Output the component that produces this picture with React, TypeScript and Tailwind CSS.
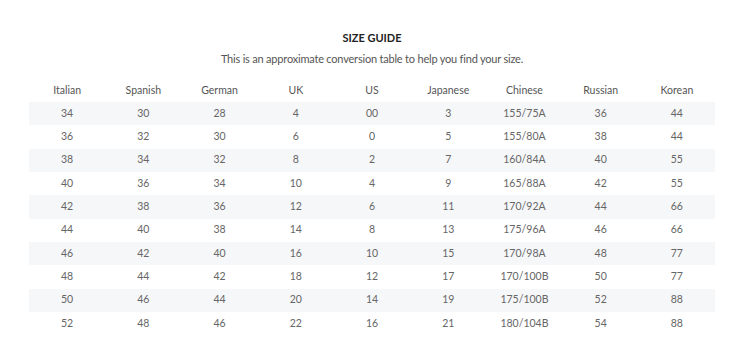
const headers = ["Italian", "Spanish", "German", "UK", "US", "Japanese", "Chinese", "Russian", "Korean"];

const rows = [
  ["34", "30", "28", "4", "00", "3", "155/75A", "36", "44"],
  ["36", "32", "30", "6", "0", "5", "155/80A", "38", "44"],
  ["38", "34", "32", "8", "2", "7", "160/84A", "40", "55"],
  ["40", "36", "34", "10", "4", "9", "165/88A", "42", "55"],
  ["42", "38", "36", "12", "6", "11", "170/92A", "44", "66"],
  ["44", "40", "38", "14", "8", "13", "175/96A", "46", "66"],
  ["46", "42", "40", "16", "10", "15", "170/98A", "48", "77"],
  ["48", "44", "42", "18", "12", "17", "170/100B", "50", "77"],
  ["50", "46", "44", "20", "14", "19", "175/100B", "52", "88"],
  ["52", "48", "46", "22", "16", "21", "180/104B", "54", "88"],
];

export default function App() {
  return (
    <div className="w-[744px] h-[364px] bg-white font-['Lato',sans-serif] text-[#666]">
      <div className="pt-[30px] flex flex-col items-center">
        <h2 className="text-[11px] font-bold text-[#222] leading-[16px]">SIZE GUIDE</h2>
        <p className="mt-[5px] text-[11px] leading-[16px] tracking-[-0.2px] text-[#555]">
          This is an approximate conversion table to help you find your size.
        </p>
      </div>
      <div className="mx-[29px] mt-[13px]">
        <div className="grid grid-cols-9 h-[22px] items-center text-[10.5px] text-[#555]">
          {headers.map((h) => (
            <div key={h} className="text-center">{h}</div>
          ))}
        </div>
        {rows.map((r, i) => (
          <div
            key={i}
            className={`grid grid-cols-9 h-[23.33px] items-center text-[10.5px] ${i % 2 === 0 ? "bg-[#f6f7f9]" : ""}`}
          >
            {r.map((c, j) => (
              <div key={j} className="text-center">{c}</div>
            ))}
          </div>
        ))}
      </div>
    </div>
  );
}
